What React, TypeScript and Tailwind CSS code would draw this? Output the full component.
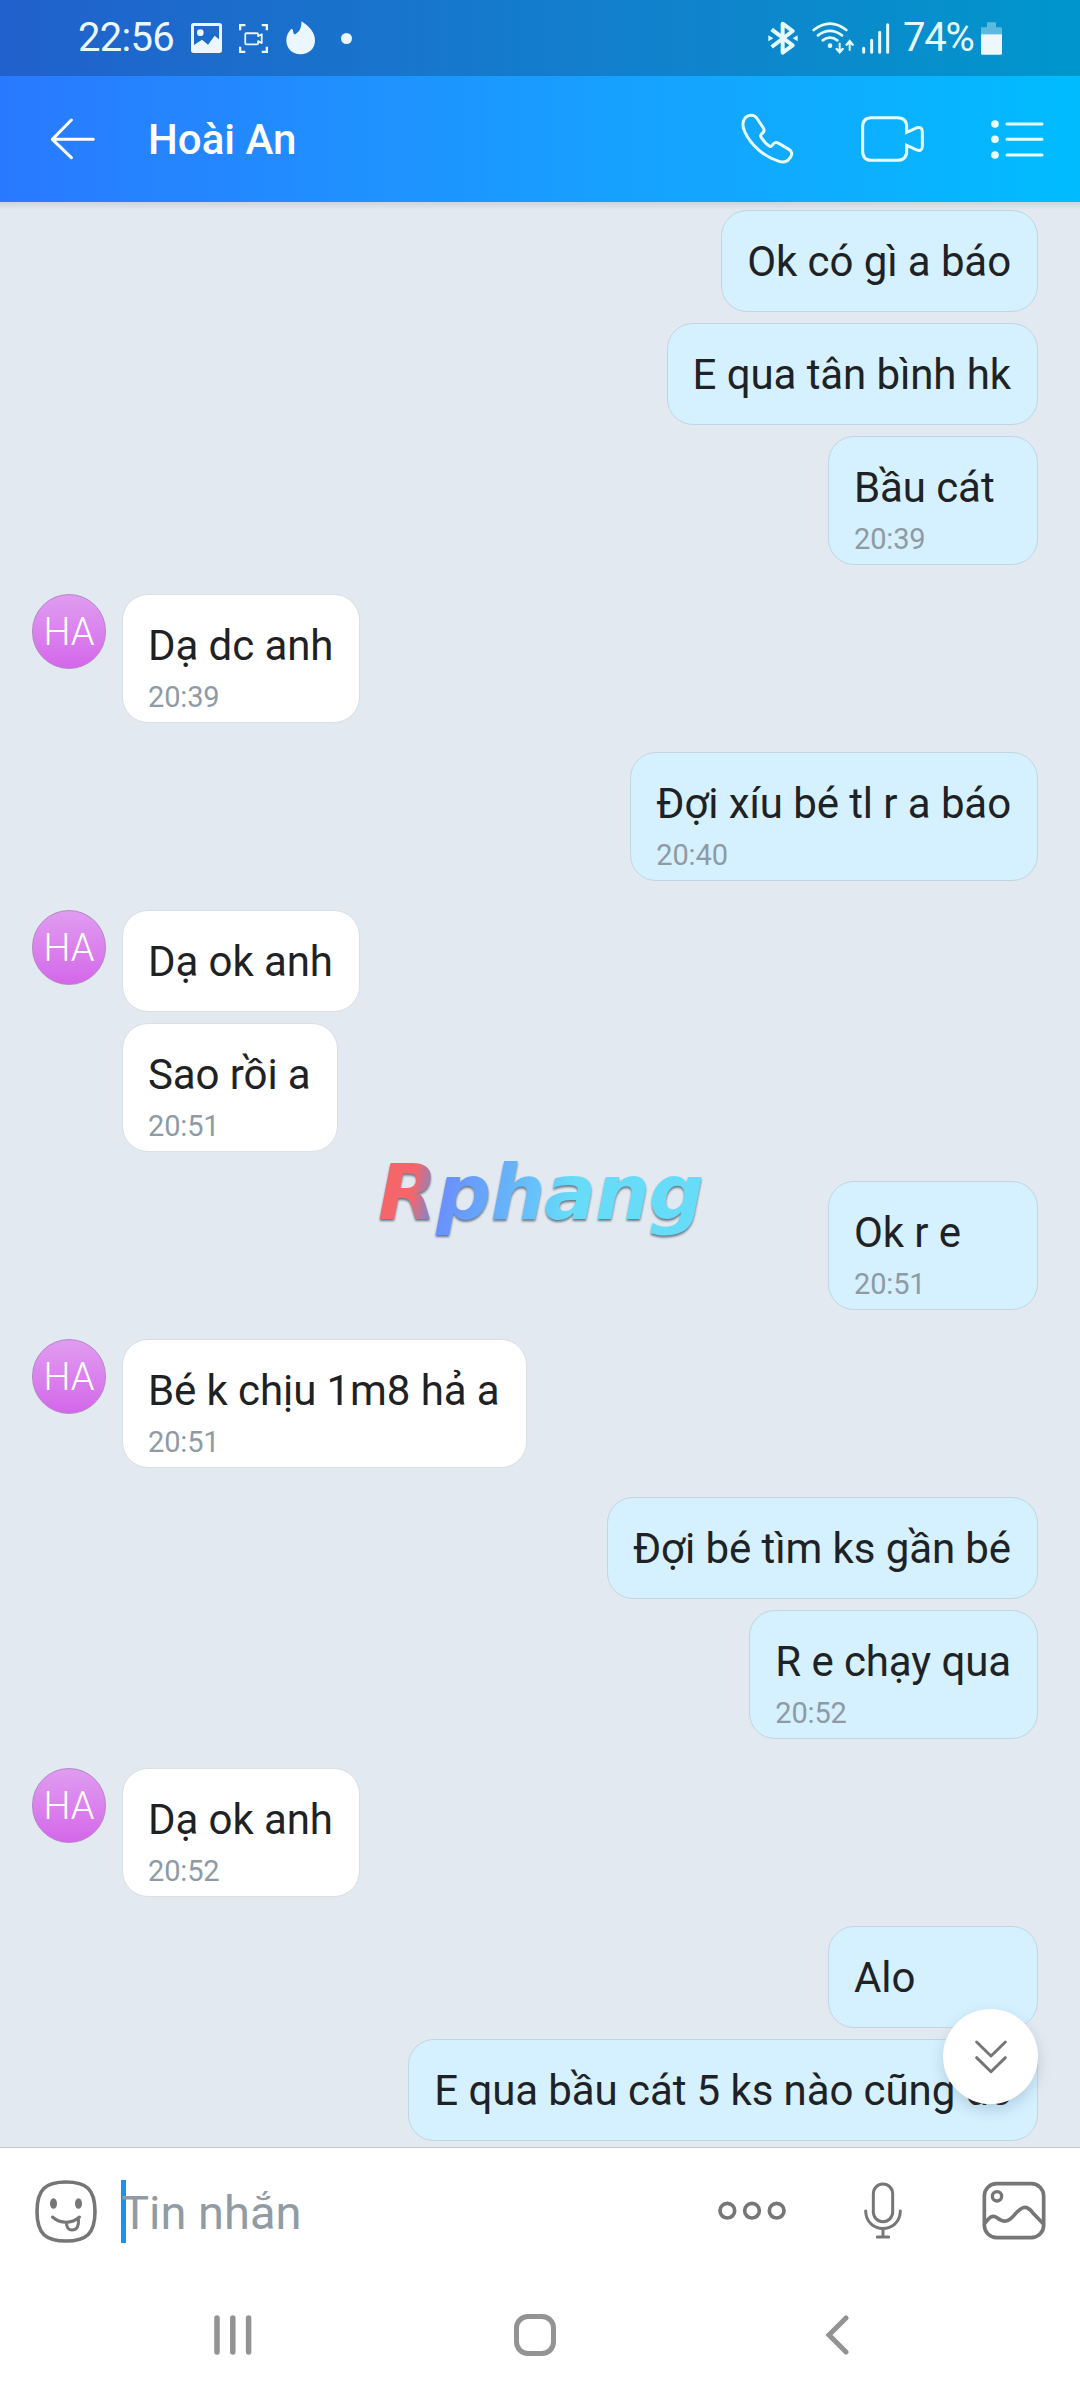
import { ReactNode } from 'react'

type Sender = 'me' | 'them'

interface Message {
  text: string
  time?: string
}

interface MessageGroup {
  from: Sender
  messages: Message[]
}

const groups: MessageGroup[] = [
  {
    from: 'me',
    messages: [
      { text: 'Ok có gì a báo' },
      { text: 'E qua tân bình hk' },
      { text: 'Bầu cát', time: '20:39' },
    ],
  },
  { from: 'them', messages: [{ text: 'Dạ dc anh', time: '20:39' }] },
  { from: 'me', messages: [{ text: 'Đợi xíu bé tl r a báo', time: '20:40' }] },
  { from: 'them', messages: [{ text: 'Dạ ok anh' }, { text: 'Sao rồi a', time: '20:51' }] },
  { from: 'me', messages: [{ text: 'Ok r e', time: '20:51' }] },
  { from: 'them', messages: [{ text: 'Bé k chịu 1m8 hả a', time: '20:51' }] },
  { from: 'me', messages: [{ text: 'Đợi bé tìm ks gần bé' }, { text: 'R e chạy qua', time: '20:52' }] },
  { from: 'them', messages: [{ text: 'Dạ ok anh', time: '20:52' }] },
  { from: 'me', messages: [{ text: 'Alo' }, { text: 'E qua bầu cát 5 ks nào cũng dc' }] },
]

export default function App() {
  return (
    <div className="w-[1080px] h-[2400px] overflow-hidden flex flex-col bg-white font-[Roboto,'Noto_Sans',sans-serif]">
      <div className="shrink-0 bg-linear-to-r from-[#2979ff] to-[#00bcff]">
        <StatusBar />
        <ChatHeader name="Hoài An" />
      </div>

      {/* Conversation */}
      <main className="relative h-[1946px] shrink-0 overflow-hidden bg-[#e2e9f1] border-b border-[#c4cad0]">
        <div className="h-2 bg-linear-to-b from-[#c9d5e2] to-[#e2e9f1]" />
        <div className="flex flex-col gap-[29px] pl-8 pr-[42px]">
          {groups.map((group, i) => (
            <Group key={i} group={group} />
          ))}
        </div>
        <Watermark />
        <button className="absolute left-[943px] top-[1807px] w-[95px] h-[95px] rounded-full bg-white shadow-[0_6px_14px_rgba(60,90,120,0.22)] flex items-center justify-center">
          <svg className="w-[34px] h-[36px]" viewBox="580 419 104 108" fill="none" stroke="#767676" strokeWidth={9} strokeLinecap="round" strokeLinejoin="round">
            <path d="M588 427l44 43 44-43M588 475l44 43 44-43" />
          </svg>
        </button>
      </main>

      <Composer />
      <NavBar />
    </div>
  )
}

function StatusBar() {
  return (
    <div className="h-[76px] bg-black/20 flex items-center pl-[78px] pr-[78px] text-[#ecf6ff]">
      <span className="w-[113px] text-[40px] leading-[40px] tracking-[-0.7px] whitespace-nowrap">22:56</span>
      <svg className="w-[31px] h-[30px]" viewBox="0 0 93 90">
        <path fill="currentColor" fillRule="evenodd" d="M8 0h77a8 8 0 0 1 8 8v74a8 8 0 0 1-8 8H8a8 8 0 0 1-8-8V8a8 8 0 0 1 8-8zM9 9v57l24-16 18 15 20-27 13 11V9zM28 19a10 10 0 1 1 0 20a10 10 0 0 1 0-20z" />
      </svg>
      <svg className="ml-[17px] w-[29px] h-[29px]" viewBox="626 38 88 88" fill="none" stroke="currentColor" strokeWidth={7}>
        <path d="M629.500 57V41.500h16M695 41.500h15.500V57M710.500 107v15.500H695M645 122.500h-15.500V107" />
        <path strokeWidth={5.5} strokeLinejoin="round" d="M648 66h32q4 0 4 4v5l11-6v27l-11-6v6q0 4-4 4h-32q-3 0-3-4V70q0-4 3-4z" />
      </svg>
      <svg className="ml-[18px] w-[29px] h-[34px]" viewBox="767 32 88 101">
        <path fill="currentColor" d="M814 32c24 15 41 34 41 58 0 25-19 42-44 42s-43-18-43-42c0-13 5-25 14-34 3-2 5-1 6 2l2 11c1 3 4 3 6 1 14-7 18-21 18-38z" />
      </svg>
      <span className="ml-[26px] w-[11px] h-[11px] rounded-full bg-[#ecf6ff]" />

      <div className="ml-auto flex items-center text-[#e6fbff]">
        {/* Bluetooth */}
        <svg className="w-[30px] h-[34px]" viewBox="113 58 90 102" fill="none" stroke="currentColor" strokeWidth={12} strokeLinejoin="round">
          <path d="M124 83l63 48-30 22V66l30 22-63 48" />
          <path fill="currentColor" stroke="none" d="M114 101l15 9-15 9zM202 101l-15 9 15 9z" />
        </svg>
        {/* Wifi */}
        <svg className="ml-[14px] w-[43px] h-[34px]" viewBox="244 58 129 102" fill="none" stroke="currentColor" strokeWidth={8} strokeLinecap="round">
          <path d="M249 85q49-38 98 0M262 101q36-27 72 0M276 116q22-16 44 0" />
          <circle cx="298" cy="132" r="7" fill="currentColor" stroke="none" />
          <path strokeLinecap="butt" strokeWidth={6} d="M327 123v26M357 147v-26" />
          <path fill="currentColor" stroke="none" d="M313 141l6-3 8 7 8-7 6 3-14 16zM343 130l6 3 8-8 8 8 6-3-14-17z" />
        </svg>
        {/* Signal */}
        <svg className="ml-[7px] w-[28px] h-[31px]" viewBox="396 66 84 92" fill="none" stroke="currentColor" strokeWidth={9} strokeLinecap="round">
          <path d="M401 141v12M425 117v36M449 93v60M473 71v82" />
        </svg>
        <span className="ml-[13px] w-[78px] text-[40px] leading-[40px] tracking-[-1.2px] whitespace-nowrap">74%</span>
        {/* Battery */}
        <svg className="w-[21px] h-[33px]" viewBox="753 60 63 98">
          <path fill="#5fb9de" d="M771 62q0-2 2-2h23q2 0 2 2v13h14q4 0 4 4v17h-63V79q0-4 4-4h14z" />
          <path fill="#eef6ff" d="M753 96h63v57q0 5-5 5h-53q-5 0-5-5z" />
        </svg>
      </div>
    </div>
  )
}

function ChatHeader({ name }: { name: string }) {
  return (
    <header className="h-[126px] flex items-center pl-[50px] pr-[36px] text-white">
      <svg className="w-[46px] h-[42px]" viewBox="60 326 138 126" fill="none" stroke="currentColor" strokeWidth={9} strokeLinecap="round" strokeLinejoin="round">
        <path d="M190 390H68M124 332l-57 58 57 55" />
      </svg>
      <h1 className="ml-[52px] pt-0.5 text-[42px] leading-[48px] font-medium whitespace-nowrap">{name}</h1>
      <div className="ml-auto flex items-center text-[#e6ffff]">
        <svg className="w-[53px] h-[52px]" viewBox="31 340 159 156" fill="none" stroke="currentColor" strokeWidth={9} strokeLinejoin="round">
          <path d="M44 354c10-10 27-9 34 1l20 30c4 7 3 11-2 15-7 6-8 8-4 14 7 11 15 20 25 26 4 2 6-1 9-5 5-7 11-8 18-4l31 18c10 6 10 15 4 24-9 14-20 17-34 12C96 471 58 431 42 396c-7-16-7-32 2-42z" />
        </svg>
        <svg className="ml-[66px] w-[65px] h-[48px]" viewBox="390 345 195 144" fill="none" stroke="currentColor" strokeWidth={9} strokeLinejoin="miter">
          <path d="M424 353h78q28 0 28 28v16l31-14q16-4 16 13v42q0 17-16 12l-31-14v17q0 28-28 28h-78q-26 0-26-28v-72q0-28 26-28z" />
        </svg>
        <svg className="ml-[66px] w-[53px] h-[41px]" viewBox="785 355 159 123" fill="none" stroke="currentColor" strokeWidth={9} strokeLinecap="round">
          <path d="M833 370h105M833 416h105M833 463h105" />
          <g fill="currentColor" stroke="none">
            <circle cx="797" cy="370" r="11.5" />
            <circle cx="797" cy="416" r="11.5" />
            <circle cx="797" cy="463" r="11.5" />
          </g>
        </svg>
      </div>
    </header>
  )
}

function Group({ group }: { group: MessageGroup }) {
  const mine = group.from === 'me'
  return (
    <div className={`flex ${mine ? 'justify-end' : 'gap-4'}`}>
      {!mine && (
        <div className="w-[74px] h-[75px] shrink-0 rounded-full border border-[#b487c8] bg-linear-to-b from-[#e09cf0] to-[#d466ea] flex items-center justify-center pt-px text-[38px] font-light text-white">
          HA
        </div>
      )}
      <div className={`flex flex-col gap-[11px] ${mine ? 'items-end' : 'items-start'}`}>
        {group.messages.map((message) => (
          <Bubble key={message.text} mine={mine}>
            <p className="text-[42px] leading-[50px] tracking-[-0.09px] text-[#1f2224]">{message.text}</p>
            {message.time && (
              <p className="mt-[9px] text-[29px] leading-[34px] tracking-[-0.15px] text-[#8e9ba5]">{message.time}</p>
            )}
          </Bubble>
        ))}
      </div>
    </div>
  )
}

function Bubble({ mine, children }: { mine: boolean; children: ReactNode }) {
  return (
    <div
      className={`rounded-[26px] border-[1.5px] pl-[25px] pr-[26px] pt-[26px] whitespace-nowrap has-[p+p]:h-[129px] h-[102px] ${
        mine ? 'min-w-[210px] bg-[#d5f0ff] border-[#c2d6e2]' : 'bg-white border-[#dadfe4]'
      }`}
    >
      {children}
    </div>
  )
}

function Watermark() {
  return (
    <div className="absolute left-[378px] top-[946px] pr-2 font-['DejaVu_Sans'] font-bold italic text-[77px] leading-[90px] tracking-[-1px] whitespace-nowrap text-transparent bg-clip-text bg-[linear-gradient(100deg,#f5666a_12%,#9a7fb5_17%,#6a90ff_21%,#66a8fa_34%,#67c0fb_46%,#66dcf8_58%)] drop-shadow-[0_2px_1px_rgba(60,80,100,0.75)]">
      Rphang
    </div>
  )
}

function Composer() {
  return (
    <div className="h-[126px] shrink-0 flex items-center pl-[35px] pr-[34px] text-[#767676]">
      <svg className="w-[62px] h-[63px]" viewBox="0 0 62 63" fill="none" stroke="currentColor" strokeWidth={3.6} strokeLinecap="round">
        <path d="M31 2c20 0 29 7 29 29.500s-9 29.500-29 29.500S2 54 2 31.500 11 2 31 2z" />
        <path strokeWidth={3} d="M17.500 37c8 7 19 7 27 0M31.500 43c0 4 2 7 5.500 7 5 0 7-4 6.500-10.500" />
        <g fill="currentColor" stroke="none">
          <ellipse cx="18.500" cy="23.500" rx="3.500" ry="5.300" />
          <ellipse cx="43.500" cy="23.500" rx="3.500" ry="5.300" />
        </g>
      </svg>
      <div className="ml-6 -mr-[5px] w-[5px] h-[63px] bg-[#2090ee]" />
      <span className="pt-[3px] text-[47px] leading-[56px] text-[#919ba4] whitespace-nowrap">Tin nhắn</span>
      <div className="ml-auto flex items-center">
        <svg className="w-[68px] h-[20px]" viewBox="54 124 204 60" fill="none" stroke="currentColor" strokeWidth={11}>
          <circle cx="82" cy="153" r="22" />
          <circle cx="156" cy="153" r="22" />
          <circle cx="230" cy="153" r="22" />
        </svg>
        <svg className="ml-[78px] w-[38px] h-[58px]" viewBox="492 69 114 174" fill="none" stroke="currentColor" strokeWidth={9} strokeLinecap="round">
          <rect x="520" y="75" width="58" height="113" rx="29" />
          <path d="M497 156c2 70 102 70 104 0M549 210v23M532 234h34" />
        </svg>
        <svg className="ml-[80px] w-[64px] h-[60px]" viewBox="846 64 192 180" fill="none" stroke="currentColor" strokeWidth={11}>
          <rect x="853" y="72" width="178" height="162" rx="37" />
          <circle cx="891" cy="110" r="14" strokeWidth={10} />
          <path d="M855 190c14-17 22-26 36-16 20 15 33 14 51-7 24-28 37-32 56-8l32 33" />
        </svg>
      </div>
    </div>
  )
}

function NavBar() {
  return (
    <nav className="grow flex items-center pl-[213px] pb-[5px] text-[#939393]">
      <svg className="w-[39px] h-[40px]" viewBox="0 0 39 40" fill="none" stroke="currentColor" strokeWidth={5.5} strokeLinecap="round">
        <path d="M4 3v34M19.800 3v34M35.600 3v34" />
      </svg>
      <div className="ml-[262px] w-[42px] h-[42px] rounded-[14px] border-[5px] border-[#939393]" />
      <svg className="ml-[269px] w-[24px] h-[40px]" viewBox="0 0 24 40" fill="none" stroke="currentColor" strokeWidth={5} strokeLinecap="round" strokeLinejoin="miter">
        <path d="M21 3L4 20l17 17" />
      </svg>
    </nav>
  )
}
